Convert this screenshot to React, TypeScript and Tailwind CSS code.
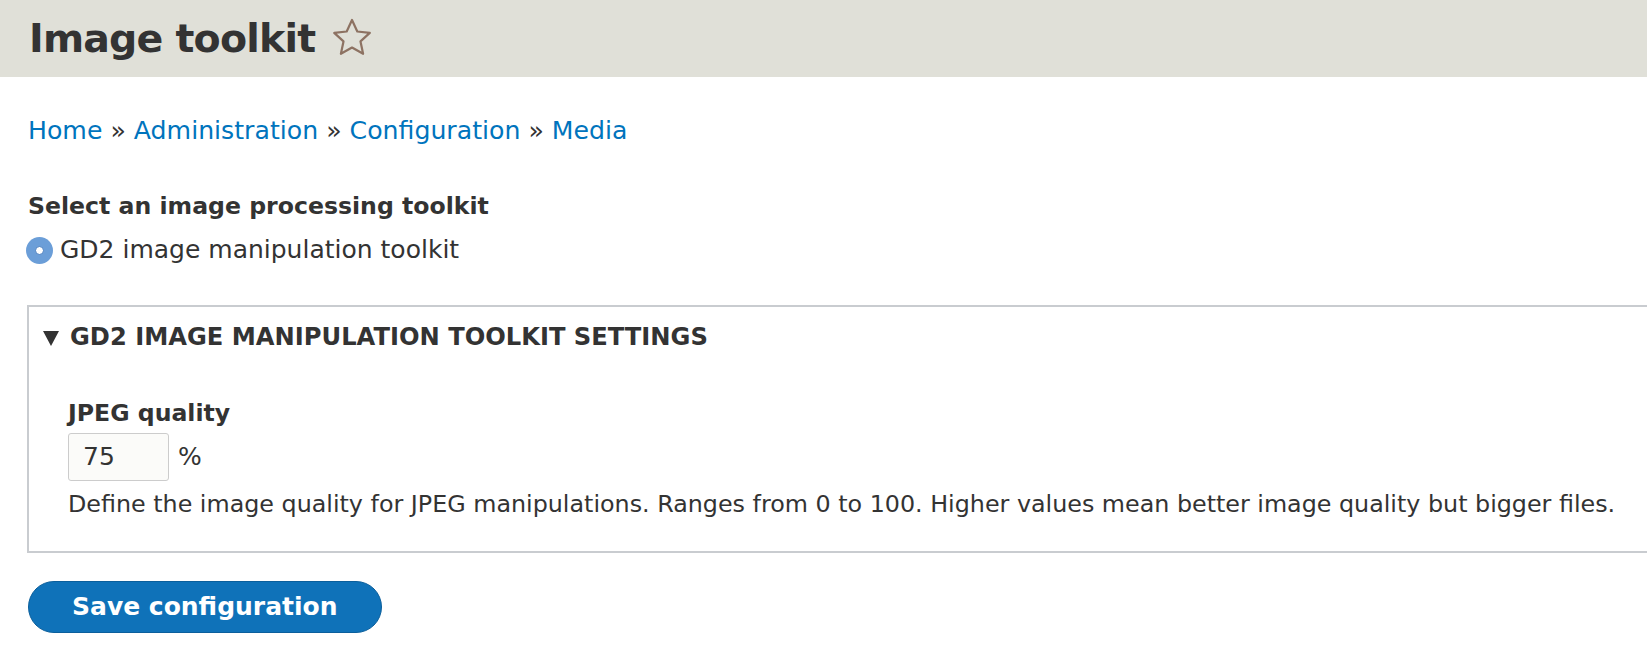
const Star = () => (
  <svg width="40" height="38" viewBox="0 0 40 38" className="ml-[17px] mt-[-3px]">
    <path
      d="M20 2 L25.3 13.5 L37.8 14.9 L28.5 23.4 L31.1 35.8 L20 29.5 L8.9 35.8 L11.5 23.4 L2.2 14.9 L14.7 13.5 Z"
      fill="none"
      stroke="#8d7262"
      strokeWidth="2.2"
      strokeLinejoin="round"
    />
  </svg>
);

const Sep = () => <span className="text-[#333]"> » </span>;

export default function App() {
  return (
    <div className="w-[1647px] h-[651px] overflow-hidden bg-white text-[#333] font-['DejaVu_Sans',sans-serif]">
      <header className="h-[77px] bg-[#e0e0d8] pl-[29px] flex items-center">
        <h1 className="text-[39.5px] leading-[77px] font-bold tracking-[-0.8px] text-[#333]">Image toolkit</h1>
        <Star />
      </header>

      <div className="pl-[28px]">
        <nav className="mt-[36px] text-[25.2px] leading-[36px] text-[#0074bd]">
          <a>Home</a>
          <Sep />
          <a>Administration</a>
          <Sep />
          <a>Configuration</a>
          <Sep />
          <a>Media</a>
        </nav>

        <div className="mt-[40px] text-[23.6px] leading-[34px] font-bold">
          Select an image processing toolkit
        </div>
        <label className="mt-[10px] flex items-center h-[34px] text-[25px] leading-[34px]">
          <span className="ml-[-2px] w-[27px] h-[27px] rounded-full bg-[#6b9ed8] flex items-center justify-center">
            <span className="w-[9px] h-[9px] rounded-full bg-white border border-[#4a7fc0]" />
          </span>
          <span className="ml-[7px]">GD2 image manipulation toolkit</span>
        </label>
      </div>

      <div className="mt-[38px] ml-[27px] w-[1700px] border-2 border-[#c9ccd0] pb-[31px]">
        <div className="pt-[13px] pl-[14px] flex items-center h-[47px] text-[24.2px] leading-[34px] font-bold uppercase">
          <svg width="16" height="15" viewBox="0 0 16 15" className="mt-[2px]">
            <path d="M0 0 H16 L8 15 Z" fill="#333" />
          </svg>
          <span className="ml-[11px]">GD2 image manipulation toolkit settings</span>
        </div>

        <div className="pl-[39px]">
          <div className="mt-[42px] text-[23.6px] leading-[34px] font-bold">JPEG quality</div>
          <div className="mt-[3px] flex items-center h-[48px]">
            <div className="w-[101px] h-[48px] border border-[#cccccc] rounded-[3px] bg-[#fbfbf9] pl-[14px] flex items-center text-[25px]">
              75
            </div>
            <span className="ml-[9px] text-[25px]">%</span>
          </div>
          <p className="mt-[7px] text-[23.8px] leading-[32px]">
            Define the image quality for JPEG manipulations. Ranges from 0 to 100. Higher values mean better image quality but bigger files.
          </p>
        </div>
      </div>

      <div className="pl-[28px] mt-[28px]">
        <button className="w-[354px] h-[52px] rounded-full bg-[#0f72b9] border border-[#0b5f9c] text-white text-[25px] font-bold text-left pl-[43px]">
          Save configuration
        </button>
      </div>
    </div>
  );
}
